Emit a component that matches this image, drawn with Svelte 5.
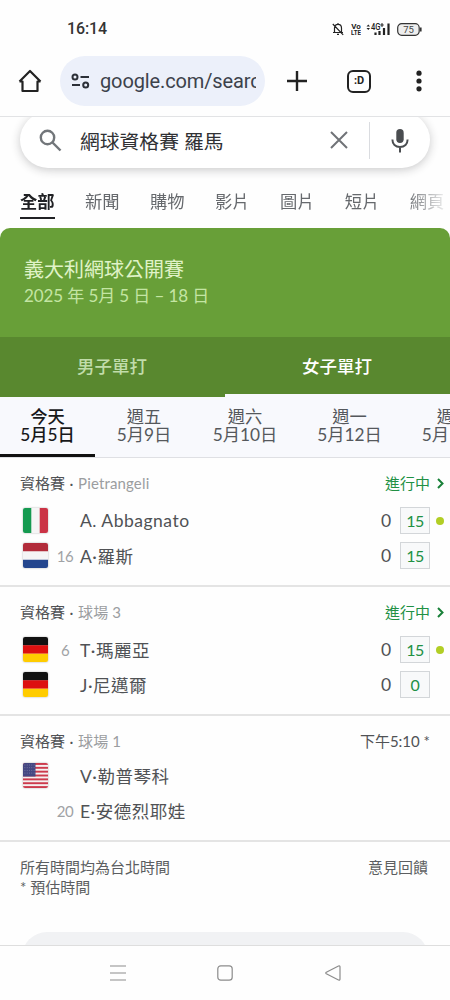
<script lang="ts">
	interface Player {
		flag?: 'it' | 'nl' | 'de' | 'us';
		seed?: number;
		name: string;
		games?: string;
		points?: string;
		serving?: boolean;
	}

	interface Match {
		court: string;
		live: boolean;
		time?: string;
		players: Player[];
	}

	const filters = ['全部', '新聞', '購物', '影片', '圖片', '短片', '網頁'];

	const days = [
		{ day: '今天', date: '5月5日' },
		{ day: '週五', date: '5月9日' },
		{ day: '週六', date: '5月10日' },
		{ day: '週一', date: '5月12日' },
		{ day: '週二', date: '5月13日' },
	];

	const matches: Match[] = [
		{
			court: 'Pietrangeli',
			live: true,
			players: [
				{ flag: 'it', name: 'A. Abbagnato', games: '0', points: '15', serving: true },
				{ flag: 'nl', seed: 16, name: 'A·羅斯', games: '0', points: '15' },
			],
		},
		{
			court: '球場 3',
			live: true,
			players: [
				{ flag: 'de', seed: 6, name: 'T·瑪麗亞', games: '0', points: '15', serving: true },
				{ flag: 'de', name: 'J·尼邁爾', games: '0', points: '0' },
			],
		},
		{
			court: '球場 1',
			live: false,
			time: '下午5:10 *',
			players: [
				{ flag: 'us', name: 'V·勒普琴科' },
				{ seed: 20, name: 'E·安德烈耶娃' },
			],
		},
	];

	let activeFilter = $state(0);
	let activeDay = $state(0);
	let draw = $state('women');
</script>

<div class="phone">
	<!-- ── Status bar ── -->
	<header class="status">
		<span class="clock">16:14</span>
		<div class="status-icons">
			<svg width="12" height="14" viewBox="0 0 12 14" fill="none" stroke="#222" stroke-width="1.2">
				<path d="M1 10.5h10M2.5 10V6C2.5 3.5 4 2.3 6 2.3S9.5 3.5 9.5 6v4M6 1v1.4M5 12.4h2M.8 2l10.4 10.8" />
			</svg>
			<svg class="volte" width="10" height="14" viewBox="0 0 10 14" fill="#222" font-weight="700">
				<text x="5" y="6.5" font-size="8" text-anchor="middle">Vo</text>
				<text x="0" y="13.300" font-size="8" textLength="10" lengthAdjust="spacingAndGlyphs">LTE</text>
			</svg>
			<svg class="signal" width="24" height="14" viewBox="0 0 24 14">
				<path d="M.5 4.500 2.300 2.500 4 4.500zM.5 6h3.500L2.300 8z" fill="#222" />
				<text x="5" y="7.500" font-size="8.500" font-weight="500" fill="#222" textLength="9.500" lengthAdjust="spacingAndGlyphs">4G</text>
				<path d="M16 1v4M14.300 3h3.400" stroke="#222" />
				<path d="M9.500 10.500v2.500M13.500 9v4M18 6V13M22.500 1.500V13" stroke="#222" stroke-width="2.200" />
			</svg>
			<svg class="battery" width="25" height="13" viewBox="0 0 25 13">
				<rect x=".7" y=".7" width="21.500" height="11.600" rx="4" fill="#eee" stroke="#333" stroke-width="1.200" />
				<path d="M23.800 4.500v4" stroke="#333" stroke-width="1.600" />
				<text x="11.500" y="10" font-size="9.500" text-anchor="middle" fill="#444">75</text>
			</svg>
		</div>
	</header>

	<!-- ── Browser toolbar ── -->
	<div class="toolbar">
		<svg class="home" width="24" height="24" viewBox="0 0 24 24" fill="none" stroke="#222" stroke-width="2.2" stroke-linejoin="round">
			<path d="M1.500 12.500 12 2l10.500 10.500M1.500 12.500h3V22h15v-9.500h3" />
		</svg>
		<div class="omnibox">
			<svg width="19" height="16" viewBox="0 0 19 16" fill="none" stroke="#2c3038" stroke-width="2">
				<circle cx="4" cy="4" r="2.500" />
				<path d="M9.500 4H18M1 12h8" />
				<circle cx="14.700" cy="12" r="2.500" />
			</svg>
			<span class="url">google.com/search</span>
		</div>
		<svg class="plus" width="20" height="20" viewBox="0 0 20 20" stroke="#222" stroke-width="2.400">
			<path d="M10 0v20M0 10h20" />
		</svg>
		<div class="tabs-count">:D</div>
		<svg class="more" width="6" height="22" viewBox="0 0 6 22" fill="#222">
			<circle cx="3" cy="3.200" r="2.600" /><circle cx="3" cy="11" r="2.600" /><circle cx="3" cy="18.800" r="2.600" />
		</svg>
	</div>

	<!-- ── Page ── -->
	<main class="page">
		<div class="search-wrap">
			<div class="search">
				<svg class="glass" width="23" height="23" viewBox="0 0 23 23" fill="none" stroke="#72767a" stroke-width="2.400">
					<circle cx="8.500" cy="8.500" r="6.700" />
					<path d="m13.500 13.500 8 8" />
				</svg>
				<span class="query">網球資格賽 羅馬</span>
				<svg class="clear" width="18" height="18" viewBox="0 0 18 18" stroke="#707377" stroke-width="2">
					<path d="m1 1 16 16M17 1 1 17" />
				</svg>
				<span class="divider"></span>
				<svg class="mic" width="18" height="25" viewBox="0 0 18 25" fill="none" stroke="#4a4d50" stroke-width="2">
					<rect x="5.300" y="1" width="7.400" height="14" rx="3.700" fill="#4a4d50" stroke="none" />
					<path d="M1.400 11.500C1.400 16 4.500 19 9 19s7.600-3 7.600-7.500M9 19v5.500" />
				</svg>
			</div>
		</div>

		<nav class="filters">
			{#each filters as label, i}
				<button class:active={activeFilter === i} onclick={() => activeFilter = i}>{label}</button>
			{/each}
		</nav>

		<section class="tournament">
			<div class="hero">
				<h1>義大利網球公開賽</h1>
				<p>2025 年 5月 5 日 – 18 日</p>
			</div>
			<div class="draws">
				<button class:active={draw === 'men'} onclick={() => draw = 'men'}>男子單打</button>
				<button class:active={draw === 'women'} onclick={() => draw = 'women'}>女子單打</button>
			</div>
		</section>

		<div class="days">
			{#each days as d, i}
				<button class:active={activeDay === i} onclick={() => activeDay = i}>
					<span>{d.day}</span>
					<span>{d.date}</span>
				</button>
			{/each}
		</div>

		{#each matches as match}
			<article class="match" class:upcoming={!match.live}>
				<div class="match-head">
					<span class="round">資格賽<i>·</i><em>{match.court}</em></span>
					{#if match.live}
						<span class="live">
							進行中
							<svg width="7" height="11" viewBox="0 0 7 11" fill="none" stroke="#188038" stroke-width="2">
								<path d="m1 1 4.500 4.500L1 10" />
							</svg>
						</span>
					{:else}
						<span class="time">{match.time}</span>
					{/if}
				</div>
				{#each match.players as p}
					<div class="player">
						<span class="flag-slot">
							{#if p.flag}
								<svg class="flag" width="25" height="25" viewBox="0 0 25 25">
									{#if p.flag === 'it'}
										<path fill="#f5f5f5" d="M0 0h25v25H0z" />
										<path fill="#159a50" d="M0 0h8.300v25H0z" />
										<path fill="#cb3345" d="M16.700 0H25v25h-8.300z" />
									{:else if p.flag === 'nl'}
										<path fill="#f5f5f5" d="M0 0h25v25H0z" />
										<path fill="#b22c3a" d="M0 0h25v8.300H0z" />
										<path fill="#24468e" d="M0 16.700h25V25H0z" />
									{:else if p.flag === 'de'}
										<path fill="#111" d="M0 0h25v8.500H0z" />
										<path fill="#dd1010" d="M0 8.300h25v8.500H0z" />
										<path fill="#fc0" d="M0 16.700h25V25H0z" />
									{:else}
										<path fill="#f5f0f0" d="M0 0h25v25H0z" />
										{#each [0, 1, 2, 3, 4, 5, 6] as n}
											<rect y={n * 3.85} width="25" height="1.920" fill="#cc3a4c" />
										{/each}
										<path fill="#454782" d="M0 0h12.500v13.400H0z" />
										{#each [2, 4.700, 7.400, 10.100] as y}
											<path d="M1.500 {y}h10" stroke="#8b8bb0" stroke-width=".8" stroke-dasharray=".8 1.500" />
										{/each}
									{/if}
								</svg>
							{/if}
						</span>
						<span class="seed">{p.seed ?? ''}</span>
						<span class="name">{p.name}</span>
						{#if p.games}
							<span class="games">{p.games}</span>
							<span class="points">{p.points}</span>
							<span class="serve" class:on={p.serving}></span>
						{/if}
					</div>
				{/each}
			</article>
		{/each}

		<footer class="notes">
			<div>所有時間均為台北時間<br />* 預估時間</div>
			<span>意見回饋</span>
		</footer>

		<div class="more-button"></div>
	</main>

	<!-- ── System navigation ── -->
	<div class="sysnav">
		<svg width="16" height="16" viewBox="0 0 16 16" stroke="#8c8c8c" stroke-width="1.200">
			<path d="M0 1h16M0 8h16M0 15h16" />
		</svg>
		<svg width="16" height="16" viewBox="0 0 16 16" fill="none" stroke="#8c8c8c" stroke-width="1.200">
			<rect x=".8" y=".8" width="14.400" height="14.400" rx="3" />
		</svg>
		<svg width="16" height="16" viewBox="0 0 16 16" fill="none" stroke="#8c8c8c" stroke-width="1.200" stroke-linejoin="round">
			<path d="M1.300 7.200 13.500 1Q15 .5 15 2v12q0 1.500-1.500 1L1.300 8.800Q.3 8 1.300 7.200z" />
		</svg>
	</div>
</div>

<style>
	:global(body) {
		background: #fefefe;
	}

	.phone {
		width: 450px;
		height: 1000px;
		display: flex;
		flex-direction: column;
		overflow: hidden;
		background: #fefefe;
		color: #505255;
		font-family: Lato, 'Noto Sans CJK TC', sans-serif;
	}

	button {
		padding: 0;
		border: 0;
		background: none;
		font: inherit;
		color: inherit;
		white-space: nowrap;
	}

	svg { flex-shrink: 0; }

	/* ── Status bar ── */
	.status {
		height: 56px;
		flex-shrink: 0;
		box-sizing: border-box;
		padding: 2px 28px 0 67px;
		display: flex;
		align-items: center;
		justify-content: space-between;
	}
	.clock {
		font: 500 16px/20px Roboto, sans-serif;
		letter-spacing: -0.1px;
		color: #333;
	}
	.status-icons {
		display: flex;
		align-items: center;
		font-family: Roboto, sans-serif;
	}
	.volte { margin: 0 5px 0 7px; }
	.signal { margin-right: 7px; }

	/* ── Toolbar ── */
	.toolbar {
		height: 61px;
		flex-shrink: 0;
		padding: 0 27px 10px 18px;
		box-sizing: border-box;
		display: flex;
		align-items: center;
		border-bottom: 1px solid #e2e3e5;
	}
	.omnibox {
		display: flex;
		align-items: center;
		width: 205px;
		height: 50px;
		margin-left: 18px;
		padding: 0 9px 0 11px;
		box-sizing: border-box;
		border-radius: 25px;
		background: #ecf0fa;
	}
	.url {
		margin-left: 10px;
		overflow: hidden;
		white-space: nowrap;
		font: 20px/28px Roboto, sans-serif;
		letter-spacing: -0.12px;
		color: #3c424b;
	}
	.plus { margin-left: 22px; }
	.tabs-count {
		width: 24px;
		height: 23px;
		margin-left: 40px;
		box-sizing: border-box;
		border: 2.5px solid #222;
		border-radius: 6px;
		font: 700 11px/18px Roboto, sans-serif;
		text-align: center;
		color: #222;
	}
	.more { margin-left: 45px; }

	/* ── Page ── */
	.page {
		flex: 1;
		min-height: 0;
		overflow: hidden;
	}
	.search-wrap {
		height: 68px;
		padding: 0 20px;
		overflow: hidden;
	}
	.search {
		display: flex;
		align-items: center;
		height: 56px;
		margin-top: -5px;
		padding: 0 21px 0 19px;
		box-sizing: border-box;
		border-radius: 28px;
		background: #fff;
		box-shadow: 0 2px 10px rgba(32, 33, 36, 0.24);
	}
	.query {
		flex: 1;
		margin-left: 18px;
		font-size: 19.8px;
		color: #303134;
	}
	.divider {
		width: 1px;
		height: 37px;
		margin: 0 21px;
		background: #dadce0;
	}

	.filters {
		display: flex;
		gap: 30.4px;
		height: 43px;
		padding: 0 0 0 20px;
		overflow: hidden;
		font-size: 17px;
		color: #66696d;
		mask-image: linear-gradient(90deg, #000 405px, transparent 450px);
	}
	.filters button {
		height: 34px;
		box-sizing: border-box;
		padding-bottom: 1px;
		border-bottom: 2px solid transparent;
		font-size: 17.3px;
		flex-shrink: 0;
	}
	.filters .active {
		border-color: #202124;
		color: #202124;
		font-weight: 700;
	}

	/* ── Tournament card ── */
	.tournament {
		border-radius: 10px 10px 0 0;
		overflow: hidden;
		background: #689f38;
	}
	.hero {
		height: 109px;
		padding: 28px 24px 0;
		box-sizing: border-box;
	}
	h1 {
		margin: 0;
		font-size: 20px;
		line-height: 26px;
		font-weight: 400;
		color: #e0f3c8;
	}
	.hero p {
		margin: 1px 0 0;
		font-size: 17px;
		line-height: 26px;
		letter-spacing: -0.1px;
		color: #c4e5a3;
	}
	.draws {
		display: flex;
		height: 60px;
		background: #59882f;
		font-size: 17.5px;
		font-weight: 500;
		color: #c1dcaa;
	}
	.draws button {
		flex: 1;
		box-sizing: border-box;
		padding-right: 1px;
		border-bottom: 3px solid transparent;
	}
	.draws .active {
		border-color: #f8f9fd;
		color: #fff;
	}

	/* ── Day tabs ── */
	.days {
		display: grid;
		grid-template-columns: 95px 98px 104px 105px 104px;
		height: 61px;
		box-sizing: border-box;
		overflow: hidden;
		background: #f8f9fd;
		border-bottom: 1px solid #dfe0e4;
	}
	.days button {
		display: flex;
		flex-direction: column;
		align-items: center;
		justify-content: flex-start;
		padding-top: 11px;
		box-sizing: border-box;
		font-size: 17.3px;
		line-height: 18px;
		font-weight: 400;
		color: #55585c;
		border-bottom: 3px solid transparent;
	}
	.days .active {
		color: #17181a;
		font-weight: 500;
		border-color: #111;
	}

	/* ── Matches ── */
	.match {
		padding: 15px 0 12px 20px;
		border-bottom: 2px solid #e4e4e4;
	}
	.match-head {
		display: flex;
		justify-content: space-between;
		height: 20px;
		margin-bottom: 10px;
		padding-right: 20px;
		font-size: 15px;
		line-height: 20px;
	}
	.upcoming .match-head { margin-bottom: 7px; }
	.round i {
		display: inline-block;
		width: 13px;
		text-align: center;
		font-style: normal;
	}
	.round em {
		font-style: normal;
		letter-spacing: 0.15px;
		color: #9b9da0;
	}
	.live {
		display: flex;
		align-items: center;
		gap: 7px;
		margin-right: -14px;
		color: #219044;
	}
	.player {
		display: flex;
		align-items: center;
		height: 35px;
	}
	.flag-slot {
		width: 30px;
		height: 25px;
		padding-left: 2.5px;
		box-sizing: border-box;
	}
	.flag {
		display: block;
		border-radius: 2px;
		box-shadow: 0 0 2px rgba(0, 0, 0, 0.35);
	}
	.seed {
		width: 30px;
		text-align: center;
		font-size: 15px;
		letter-spacing: -0.5px;
		color: #a0a2a5;
	}
	.name {
		flex: 1;
		font-size: 17.5px;
		letter-spacing: 0.5px;
	}
	.games {
		width: 10px;
		font-size: 17.5px;
	}
	.points {
		width: 30px;
		height: 27px;
		margin-left: 9px;
		box-sizing: border-box;
		border: 1px solid #d3d6d9;
		background: #f8f9fa;
		font-size: 16px;
		line-height: 25px;
		letter-spacing: -0.5px;
		text-align: center;
		color: #219044;
	}
	.serve {
		width: 8px;
		height: 8px;
		margin: 0 6px;
		border-radius: 50%;
	}
	.serve.on { background: #b2ce25; }

	/* ── Notes ── */
	.notes {
		display: flex;
		justify-content: space-between;
		height: 90px;
		padding: 15px 22px 0 20px;
		box-sizing: border-box;
		font-size: 15px;
		line-height: 20px;
		color: #5c5e61;
	}
	.more-button {
		height: 50px;
		margin: 0 22px;
		border-radius: 25px;
		background: #f1f2f4;
	}

	/* ── System navigation ── */
	.sysnav {
		display: flex;
		justify-content: center;
		align-items: center;
		gap: 91.5px;
		height: 55px;
		box-sizing: border-box;
		flex-shrink: 0;
		border-top: 1px solid #dedede;
	}
</style>
